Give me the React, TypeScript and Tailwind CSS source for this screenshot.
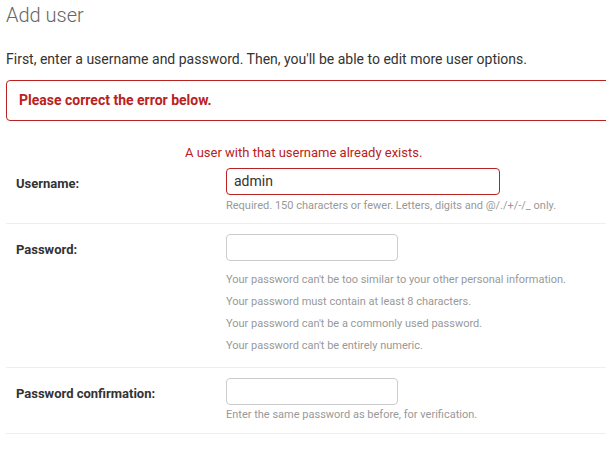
export default function App() {
  const pwHelp = [
    "Your password can't be too similar to your other personal information.",
    'Your password must contain at least 8 characters.',
    "Your password can't be a commonly used password.",
    "Your password can't be entirely numeric.",
  ]

  return (
    <div className="w-[606px] h-[450px] overflow-hidden bg-white text-[#333] font-['Roboto',sans-serif]">
      <div className="w-[640px] pl-[6px]">
        {/* Header */}
        <h1 className="pt-[3px] text-[20px] leading-[25px] font-light text-[#666]">Add user</h1>
        <p className="mt-[22px] text-[14px] leading-[18px]">
          First, enter a username and password. Then, you'll be able to edit more user options.
        </p>

        {/* Error note */}
        <div className="mt-[12px] h-[41px] border border-[#ba2121] rounded-[4px] flex items-center pl-[12px]">
          <span className="text-[14px] font-bold text-[#ba2121]">Please correct the error below.</span>
        </div>

        {/* Username */}
        <div className="border-b border-[#eee] pt-[23px] pb-[9px]">
          <p className="ml-[179px] text-[13px] leading-[18px] text-[#ba2121]">
            A user with that username already exists.
          </p>
          <div className="mt-[6px] flex items-center">
            <label className="w-[220px] pl-[10px] pt-[4px] text-[13px] font-bold">Username:</label>
            <div className="w-[274px] h-[27px] border border-[#ba2121] rounded-[4px] flex items-center px-[7px] text-[14px]">
              admin
            </div>
          </div>
          <p className="mt-[3px] ml-[220px] text-[11px] leading-[16px] text-[#999]">
            Required. 150 characters or fewer. Letters, digits and @/./+/-/_ only.
          </p>
        </div>

        {/* Password */}
        <div className="border-b border-[#eee] pt-[10px] pb-[10px]">
          <div className="flex items-center">
            <label className="w-[220px] pl-[10px] pt-[4px] text-[13px] font-bold">Password:</label>
            <div className="w-[172px] h-[27px] border border-[#ccc] rounded-[4px]" />
          </div>
          <ul className="mt-[8px] ml-[220px] text-[11px] leading-[22px] text-[#999]">
            {pwHelp.map((t) => (
              <li key={t}>{t}</li>
            ))}
          </ul>
        </div>

        {/* Password confirmation */}
        <div className="border-b border-[#eee] pt-[10px] pb-[10px]">
          <div className="flex items-center">
            <label className="w-[220px] pl-[10px] pt-[4px] text-[13px] font-bold">Password confirmation:</label>
            <div className="w-[172px] h-[27px] border border-[#ccc] rounded-[4px]" />
          </div>
          <p className="mt-[2px] ml-[220px] text-[11px] leading-[16px] text-[#999]">
            Enter the same password as before, for verification.
          </p>
        </div>
      </div>
    </div>
  )
}
